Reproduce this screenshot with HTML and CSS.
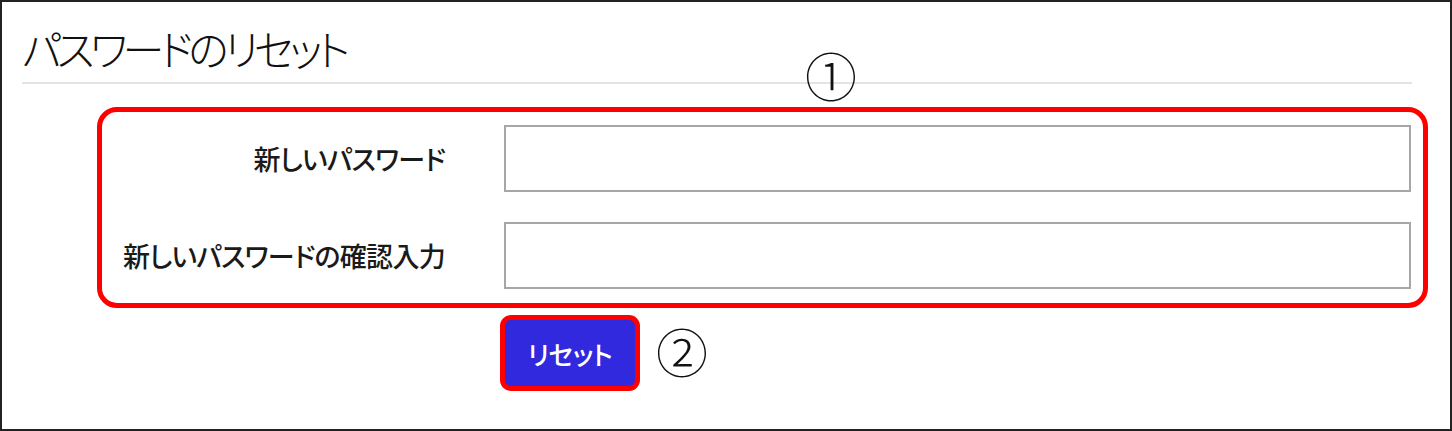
FILE: index.html
```html
<!DOCTYPE html>
<html lang="ja">
<head>
<meta charset="utf-8">
<title>パスワードのリセット</title>
<link rel="stylesheet" href="styles.css">
</head>
<body>
<div class="page">
  <h1 class="title">パスワードのリセット</h1>
  <div class="rule"></div>
  <span class="note note-1">①</span>
  <form class="form-box">
    <div class="row">
      <label class="label" for="pw1">新しいパスワード</label>
      <input class="field" id="pw1" type="password">
    </div>
    <div class="row">
      <label class="label" for="pw2">新しいパスワードの確認入力</label>
      <input class="field" id="pw2" type="password">
    </div>
  </form>
  <div class="actions">
    <button class="btn" type="button">リセット</button>
    <span class="note note-2">②</span>
  </div>
</div>
</body>
</html>
```

FILE: styles.css
```css
html, body {
  margin: 0;
  padding: 0;
  background: #fff;
}
body {
  font-family: "Noto Sans CJK JP", "Noto Sans", sans-serif;
  color: #1a1a1a;
}
.page {
  position: relative;
  box-sizing: border-box;
  width: 1452px;
  height: 431px;
  border: 2px solid #222;
  padding: 0 22px 0 20px;
}
.title {
  margin: 0;
  padding-top: 17px;
  height: 63px;
  font-size: 42px;
  line-height: 58px;
  font-weight: 300;
  font-feature-settings: "palt";
  letter-spacing: -4.6px;
  color: #111;
  white-space: nowrap;
}
.rule {
  height: 2px;
  background: #e4e4e4;
  margin-right: 16px;
}
.note {
  font-family: "Noto Sans CJK JP", sans-serif;
  font-weight: 300;
  font-size: 52px;
  line-height: 52px;
  color: #111;
}
.note-1 {
  position: absolute;
  left: 803px;
  top: 47px;
}
.form-box {
  margin: 23px 0 0 75px;
  border: 5px solid #ff0000;
  border-radius: 20px;
  padding: 13px 12px 14px 0;
  display: flex;
  flex-direction: column;
  gap: 30px;
}
.row {
  display: grid;
  grid-template-columns: 343px 1fr;
  column-gap: 59px;
  align-items: center;
}
.label {
  text-align: right;
  font-size: 27px;
  font-weight: 500;
  font-feature-settings: "palt";
  letter-spacing: -0.7px;
  color: #1a1a1a;
  white-space: nowrap;
}
.field {
  box-sizing: border-box;
  height: 67px;
  width: 100%;
  border: 2px solid #a6a6a6;
  background: #fff;
  margin: 0;
  padding: 0 10px;
  outline: none;
}
.actions {
  display: flex;
  align-items: center;
  gap: 16px;
  margin: 7px 0 0 478px;
}
.btn {
  box-sizing: border-box;
  width: 140px;
  height: 76px;
  border: 5px solid #ff0000;
  border-radius: 11px;
  background: #3029de;
  color: #fff;
  font-family: "Noto Sans CJK JP", sans-serif;
  font-size: 26px;
  font-weight: 500;
  font-feature-settings: "palt";
  letter-spacing: -0.5px;
  padding: 0;
  cursor: pointer;
}
.note-2 {
  display: inline-block;
  margin-top: -4px;
}
```
